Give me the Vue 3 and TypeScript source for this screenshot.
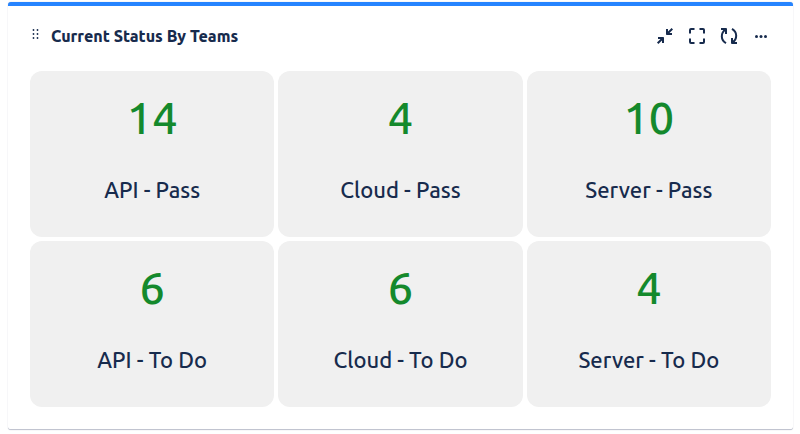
<script setup lang="ts">
interface TeamStatus {
  label: string
  count: number
}

const statuses: TeamStatus[] = [
  { label: 'API - Pass', count: 14 },
  { label: 'Cloud - Pass', count: 4 },
  { label: 'Server - Pass', count: 10 },
  { label: 'API - To Do', count: 6 },
  { label: 'Cloud - To Do', count: 6 },
  { label: 'Server - To Do', count: 4 },
]
</script>

<template>
  <section class="gadget" aria-labelledby="gadget-title">
    <header class="header">
      <svg class="handle" viewBox="0 0 8 12" aria-hidden="true">
        <circle cx="1.500" cy="2" r="0.900" />
        <circle cx="5.500" cy="2" r="0.900" />
        <circle cx="1.500" cy="6" r="0.900" />
        <circle cx="5.500" cy="6" r="0.900" />
        <circle cx="1.500" cy="10" r="0.900" />
        <circle cx="5.500" cy="10" r="0.900" />
      </svg>
      <h2 id="gadget-title" class="title">Current Status By Teams</h2>
      <div class="actions">
        <button class="action" type="button" aria-label="Minimize">
          <svg viewBox="0 0 24 24" aria-hidden="true">
            <path class="line" d="M19.300 4.700L15 9M4.700 19.300L9 15" />
            <path d="M13 5v5.200q0 .8.8.8H19V9h-2.500L15 7.500V5zM11 19v-5.200q0-.8-.8-.8H5v2h2.500L9 16.500V19z" />
          </svg>
        </button>
        <button class="action" type="button" aria-label="Maximize">
          <svg viewBox="0 0 24 24" aria-hidden="true">
            <path class="line" d="M5 9.500V6q0-1 1-1h3.500M14.500 5H18q1 0 1 1v3.500M19 14.500V18q0 1-1 1h-3.500M9.500 19H6q-1 0-1-1v-3.500" />
          </svg>
        </button>
        <button class="action" type="button" aria-label="Refresh">
          <svg viewBox="0 0 24 24" aria-hidden="true">
            <path class="line" d="M9 19.200C3.500 16 3.500 9 8.500 5.500M15 4.800C20.500 8 20.500 15 15.500 18.500" />
            <path d="M4 4h5q1 0 1 1v5H8V7.500L6.500 6H4zM20 20h-5q-1 0-1-1v-5h2v2.500l1.500 1.500H20z" />
          </svg>
        </button>
        <button class="action" type="button" aria-label="More actions">
          <svg viewBox="0 0 24 24" aria-hidden="true">
            <circle cx="7.500" cy="12.500" r="1.500" />
            <circle cx="12" cy="12.500" r="1.500" />
            <circle cx="16.500" cy="12.500" r="1.500" />
          </svg>
        </button>
      </div>
    </header>
    <ul class="tiles">
      <li v-for="status in statuses" :key="status.label" class="tile">
        <span class="count">{{ status.count }}</span>
        <span class="label">{{ status.label }}</span>
      </li>
    </ul>
  </section>
</template>

<style>
body {
  background: #fff;
}
</style>

<style scoped>
.gadget {
  box-sizing: border-box;
  margin: 2px 7px 4px 8px;
  padding: 0 22px 22px;
  border-top: 4px solid #2684ff;
  border-bottom: 1px solid #c1c4d0;
  border-radius: 3px;
  background: #fff;
  box-shadow: 0 0 1px rgba(9, 30, 66, 0.31);
  color: #172b4d;
  font-family: Ubuntu, "Noto Sans", "Open Sans", sans-serif;
}

.header {
  display: flex;
  align-items: center;
  height: 60px;
  margin-bottom: 5px;
}

.handle {
  width: 8px;
  height: 12px;
  margin: 0 11px 4px 2px;
  fill: #172b4d;
}

.title {
  flex: 1;
  margin: 0;
  font-size: 16px;
  font-weight: 800;
  line-height: 20px;
}

.actions {
  display: flex;
  gap: 8px;
  margin-right: -2px;
}

.action {
  width: 24px;
  height: 24px;
  padding: 0;
  border: 0;
  background: none;
  color: inherit;
  cursor: pointer;
}

.action svg {
  display: block;
  width: 24px;
  height: 24px;
  fill: currentColor;
}

.action .line {
  fill: none;
  stroke: currentColor;
  stroke-width: 2;
}

.tiles {
  display: grid;
  grid-template-columns: repeat(3, 1fr);
  gap: 4px;
  margin: 0;
  padding: 0;
  list-style: none;
}

.tile {
  display: flex;
  flex-direction: column;
  align-items: center;
  gap: 24px;
  padding: 15px 8px 31px;
  border-radius: 12px;
  background: #f0f0f0;
  font-weight: 500;
}

.count {
  color: #14892c;
  font-size: 45px;
  line-height: 64px;
}

.label {
  font-size: 22px;
  line-height: 32px;
}
</style>
